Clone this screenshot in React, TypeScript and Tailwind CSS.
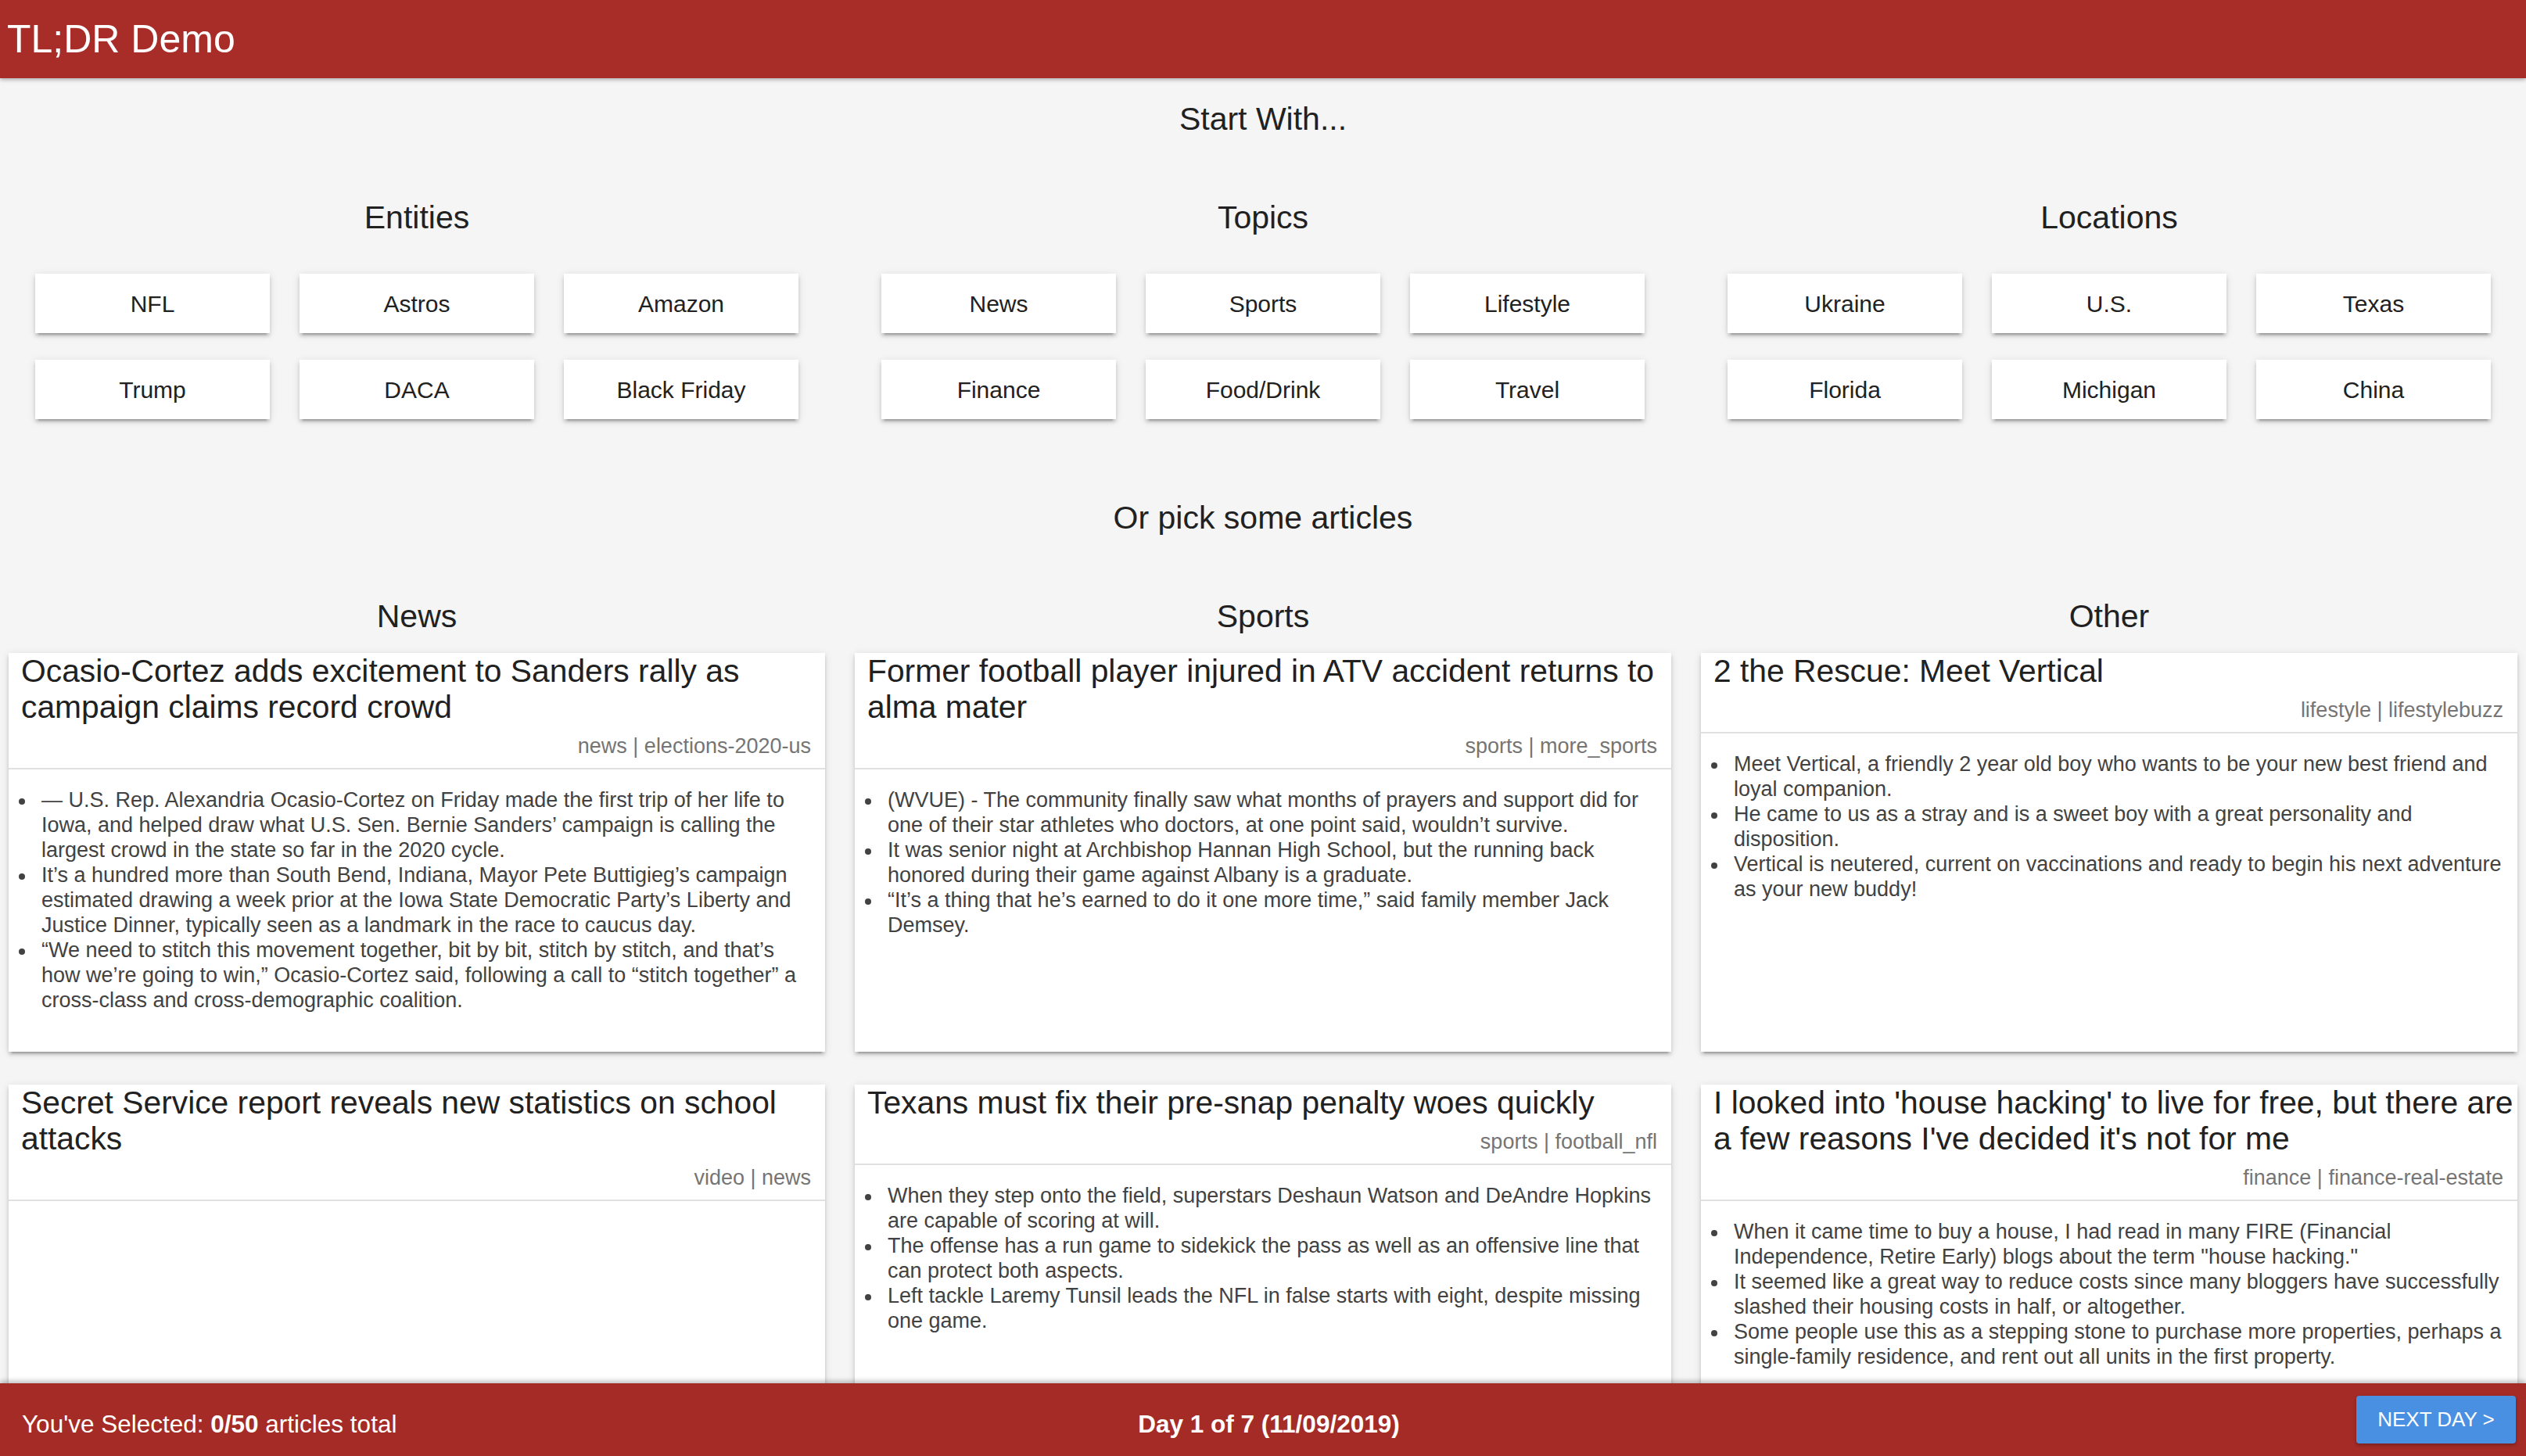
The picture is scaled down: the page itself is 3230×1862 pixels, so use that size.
import React from 'react';

type Article = { title: string; meta: string; points: string[] };

const startWith = [
  { name: 'Entities', items: ['NFL', 'Astros', 'Amazon', 'Trump', 'DACA', 'Black Friday'] },
  { name: 'Topics', items: ['News', 'Sports', 'Lifestyle', 'Finance', 'Food/Drink', 'Travel'] },
  { name: 'Locations', items: ['Ukraine', 'U.S.', 'Texas', 'Florida', 'Michigan', 'China'] },
];

const columns: { name: string; articles: Article[] }[] = [
  {
    name: 'News',
    articles: [
      {
        title: 'Ocasio-Cortez adds excitement to Sanders rally as campaign claims record crowd',
        meta: 'news | elections-2020-us',
        points: [
          '— U.S. Rep. Alexandria Ocasio-Cortez on Friday made the first trip of her life to Iowa, and helped draw what U.S. Sen. Bernie Sanders’ campaign is calling the largest crowd in the state so far in the 2020 cycle.',
          'It’s a hundred more than South Bend, Indiana, Mayor Pete Buttigieg’s campaign estimated drawing a week prior at the Iowa State Democratic Party’s Liberty and Justice Dinner, typically seen as a landmark in the race to caucus day.',
          '“We need to stitch this movement together, bit by bit, stitch by stitch, and that’s how we’re going to win,” Ocasio-Cortez said, following a call to “stitch together” a cross-class and cross-demographic coalition.',
        ],
      },
      {
        title: 'Secret Service report reveals new statistics on school attacks',
        meta: 'video | news',
        points: [],
      },
    ],
  },
  {
    name: 'Sports',
    articles: [
      {
        title: 'Former football player injured in ATV accident returns to alma mater',
        meta: 'sports | more_sports',
        points: [
          '(WVUE) - The community finally saw what months of prayers and support did for one of their star athletes who doctors, at one point said, wouldn’t survive.',
          'It was senior night at Archbishop Hannan High School, but the running back honored during their game against Albany is a graduate.',
          '“It’s a thing that he’s earned to do it one more time,” said family member Jack Demsey.',
        ],
      },
      {
        title: 'Texans must fix their pre-snap penalty woes quickly',
        meta: 'sports | football_nfl',
        points: [
          'When they step onto the field, superstars Deshaun Watson and DeAndre Hopkins are capable of scoring at will.',
          'The offense has a run game to sidekick the pass as well as an offensive line that can protect both aspects.',
          'Left tackle Laremy Tunsil leads the NFL in false starts with eight, despite missing one game.',
        ],
      },
    ],
  },
  {
    name: 'Other',
    articles: [
      {
        title: '2 the Rescue: Meet Vertical',
        meta: 'lifestyle | lifestylebuzz',
        points: [
          'Meet Vertical, a friendly 2 year old boy who wants to be your new best friend and loyal companion.',
          'He came to us as a stray and is a sweet boy with a great personality and disposition.',
          'Vertical is neutered, current on vaccinations and ready to begin his next adventure as your new buddy!',
        ],
      },
      {
        title: "I looked into 'house hacking' to live for free, but there are a few reasons I've decided it's not for me",
        meta: 'finance | finance-real-estate',
        points: [
          'When it came time to buy a house, I had read in many FIRE (Financial Independence, Retire Early) blogs about the term "house hacking."',
          'It seemed like a great way to reduce costs since many bloggers have successfully slashed their housing costs in half, or altogether.',
          'Some people use this as a stepping stone to purchase more properties, perhaps a single-family residence, and rent out all units in the first property.',
        ],
      },
    ],
  },
];

const ArticleCard: React.FC<{ article: Article }> = ({ article }) => (
  <div className="h-[510px] overflow-hidden bg-white shadow-[0_6px_2px_-4px_rgba(0,0,0,0.2),0_4px_4px_0_rgba(0,0,0,0.14),0_2px_10px_0_rgba(0,0,0,0.12)]">
    <div className="pl-[16px] pb-[12px]">
      <h3 className="text-[40.8px] leading-[46px] text-[#212121]">{article.title}</h3>
      <p className="mt-[11px] pr-[18px] text-right text-[27px] leading-[32px] text-[#757575]">{article.meta}</p>
    </div>
    <div className="h-[2px] bg-[#e0e0e0]" />
    <ul className="pt-[23px] pl-[13px] pr-[16px]">
      {article.points.map((p, i) => (
        <li key={i} className="flex text-[27px] leading-[32px] text-[#424242]">
          <span className="w-[29px] shrink-0 pt-[14px]">
            <span className="block w-[8px] h-[8px] rounded-full bg-[#424242]" />
          </span>
          <span>{p}</span>
        </li>
      ))}
    </ul>
  </div>
);

export default function App() {
  return (
    <div className="relative h-screen overflow-hidden bg-[#f5f5f5] font-['Liberation_Sans',Arial,sans-serif] text-[#212121]">
      {/* top bar */}
      <header className="relative z-10 flex h-[100px] items-center bg-[#a82c28] pl-[9px] text-[50px] leading-[50px] text-white shadow-[0_2px_5px_rgba(0,0,0,0.3)]">
        TL;DR Demo
      </header>

      <main>
        <h2 className="mt-[28px] text-center text-[41px] leading-[48px]">Start With...</h2>

        <div className="mt-[78px] grid grid-cols-3 gap-x-[38px] px-[11px]">
          {startWith.map(group => (
            <div key={group.name} className="flex flex-col items-center">
              <h3 className="text-[41px] leading-[48px]">{group.name}</h3>
              <div className="mt-[48px] grid grid-cols-[300px_300px_300px] gap-x-[38px] gap-y-[34px]">
                {group.items.map(item => (
                  <button
                    key={item}
                    className="h-[76px] bg-white text-[30px] text-[#212121] shadow-[0_6px_2px_-4px_rgba(0,0,0,0.2),0_4px_4px_0_rgba(0,0,0,0.14),0_2px_10px_0_rgba(0,0,0,0.12)]"
                  >
                    {item}
                  </button>
                ))}
              </div>
            </div>
          ))}
        </div>

        <h2 className="mt-[102px] text-center text-[41px] leading-[48px]">Or pick some articles</h2>

        <div className="mt-[78px] grid grid-cols-3 gap-x-[38px] px-[11px]">
          {columns.map(col => (
            <div key={col.name} className="flex flex-col">
              <h3 className="text-center text-[41px] leading-[48px]">{col.name}</h3>
              <div className="mt-[23px] flex flex-col gap-[42px]">
                {col.articles.map((a, i) => (
                  <ArticleCard key={i} article={a} />
                ))}
              </div>
            </div>
          ))}
        </div>
      </main>

      {/* bottom bar */}
      <footer className="absolute bottom-0 left-0 right-0 z-20 flex h-[93px] items-center bg-[#a52b27] text-[31.5px] text-white shadow-[0_-3px_6px_rgba(0,0,0,0.25)]">
        <div className="flex-1 pl-[28px] pt-[12px]">
          You've Selected: <span className="font-bold">0/50</span> articles total
        </div>
        <div className="pt-[12px] font-bold">Day 1 of 7 (11/09/2019)</div>
        <div className="flex flex-1 justify-end pr-[13px]">
          <button className="h-[61px] w-[204px] rounded-[4px] bg-[#4a90e2] text-[26px] uppercase text-white shadow-[0_2px_4px_rgba(0,0,0,0.3)]">
            Next Day &gt;
          </button>
        </div>
      </footer>
    </div>
  );
}
